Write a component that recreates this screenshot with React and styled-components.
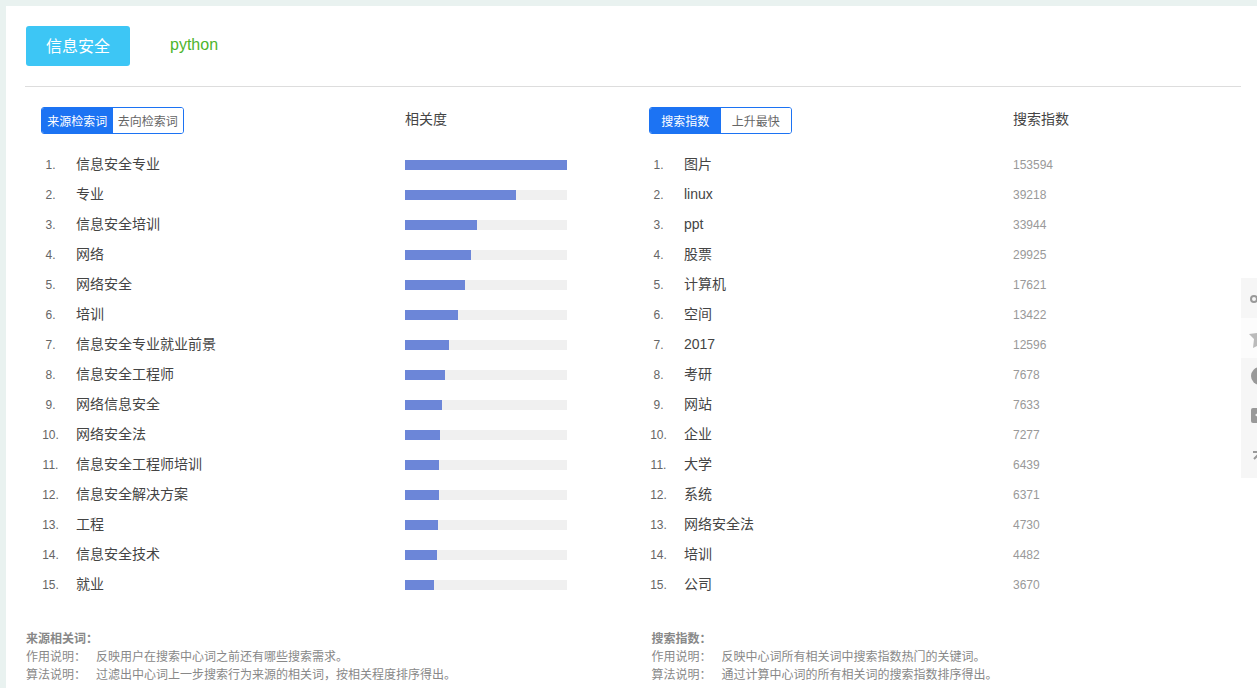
import React, { useState } from 'react';

import styled, { createGlobalStyle } from 'styled-components';

const GlobalStyle = createGlobalStyle`
  *, *::before, *::after {
    box-sizing: border-box;
  }

  body {
    margin: 0;
    background: #e9f2f0;
    color: #444;
    font-family: 'Liberation Sans', 'Noto Sans CJK SC', sans-serif;
    font-size: 14px;
  }

  button {
    font-family: inherit;
    cursor: pointer;
  }
`;

const Page = styled.div`
  padding: 6px 0 0 6px;
`;

const Panel = styled.main`
  min-height: calc(100vh - 6px);
  padding: 20px 16px 4px 19px;
  background: #fff;
`;

const KeywordBar = styled.nav`
  display: flex;
  gap: 20px;
  padding: 0 1px 20px;
  border-bottom: 1px solid #ddd;
`;

const Keyword = styled.button`
  height: 40px;
  padding: 0 20px 2px;
  border: 0;
  border-radius: 3px;
  background: ${({ $active }) => ($active ? '#3dc6f5' : 'transparent')};
  color: ${({ $active }) => ($active ? '#fff' : '#4db52b')};
  font-size: 16px;
`;

const Columns = styled.div`
  display: grid;
  grid-template-columns: 1fr 1fr;
  padding: 20px 0 0;
`;

const RankTable = styled.table`
  width: calc(100% - 16px);
  margin-left: 16px;
  border-collapse: collapse;
  table-layout: fixed;
`;

const NumberCol = styled.col`
  width: 35px;
`;

const ValueCol = styled.col`
  width: 228px;
`;

const HeadCell = styled.th`
  height: 43px;
  padding: 0;
  font-weight: 400;
  line-height: 24px;
  text-align: left;
  vertical-align: top;
`;

const Toggle = styled.div`
  display: flex;
  width: 143px;
  height: 27px;
  overflow: hidden;
  border: 1px solid #1c73f3;
  border-radius: 3px;
`;

const ToggleButton = styled.button`
  flex: 1;
  padding: 0 0 1px;
  border: 0;
  background: ${({ $active }) => ($active ? '#1c73f3' : '#fff')};
  color: ${({ $active }) => ($active ? '#fff' : '#666')};
  font-size: 12px;
  white-space: nowrap;
`;

const Cell = styled.td`
  height: 30px;
  padding: 0;
  line-height: 20px;
`;

const NumberCell = styled(Cell)`
  padding-right: 16px;
  color: #666;
  font-size: 12px;
  text-align: center;
`;

const NameCell = styled(Cell)`
  padding-bottom: 2px;
`;

const ValueCell = styled(Cell)`
  color: #999;
  font-size: 12px;
`;

const Track = styled.div`
  width: 162px;
  height: 10px;
  background: #f0f0f0;
`;

const Fill = styled.div`
  height: 100%;
  background: #6c86d8;
`;

const Notes = styled.div`
  display: grid;
  grid-template-columns: 1fr 1fr;
  gap: 36px;
  padding: 30px 0 0 1px;
  color: #888;
  font-size: 12px;
  line-height: 18px;
`;

const NoteTitle = styled.h2`
  margin: 0;
  font-size: 12px;
  font-weight: 700;
`;

const NoteLine = styled.p`
  display: flex;
  gap: 10px;
  margin: 0;
`;

const NoteLabel = styled.span`
  flex: none;
`;

const ShareBar = styled.aside`
  position: fixed;
  top: 278px;
  right: 0;
  display: flex;
  flex-direction: column;
  width: 16px;
  overflow: hidden;
`;

const ShareButton = styled.button`
  height: 40px;
  padding: 0;
  border: 0;
  background: ${({ $light }) => ($light ? '#fcfcfc' : '#f6f6f6')};
  color: ${({ $light }) => ($light ? '#bbb' : '#999')};

  svg {
    display: block;
  }
`;

const related = [
  ['信息安全专业', 162],
  ['专业', 111],
  ['信息安全培训', 72],
  ['网络', 66],
  ['网络安全', 60],
  ['培训', 53],
  ['信息安全专业就业前景', 44],
  ['信息安全工程师', 40],
  ['网络信息安全', 37],
  ['网络安全法', 35],
  ['信息安全工程师培训', 34],
  ['信息安全解决方案', 34],
  ['工程', 33],
  ['信息安全技术', 32],
  ['就业', 29],
];

const searches = [
  ['图片', 153594],
  ['linux', 39218],
  ['ppt', 33944],
  ['股票', 29925],
  ['计算机', 17621],
  ['空间', 13422],
  ['2017', 12596],
  ['考研', 7678],
  ['网站', 7633],
  ['企业', 7277],
  ['大学', 6439],
  ['系统', 6371],
  ['网络安全法', 4730],
  ['培训', 4482],
  ['公司', 3670],
];

const notes = [
  {
    title: '来源相关词：',
    usage: '反映用户在搜索中心词之前还有哪些搜索需求。',
    method: '过滤出中心词上一步搜索行为来源的相关词，按相关程度排序得出。',
  },
  {
    title: '搜索指数：',
    usage: '反映中心词所有相关词中搜索指数热门的关键词。',
    method: '通过计算中心词的所有相关词的搜索指数排序得出。',
  },
];

const shareItems = [
  {
    label: '微博',
    icon: <circle cx='13' cy='21' r='3' fill='none' stroke='currentColor' strokeWidth='2' />,
  },
  {
    label: '收藏',
    light: true,
    icon: <path d='M18 11l-2 4-8 1 5 5-1 9 6-3z' fill='currentColor' />,
  },
  {
    label: '微信',
    icon: <circle cx='19' cy='18' r='9' fill='currentColor' />,
  },
  {
    label: '视频',
    icon: (
      <>
        <rect x='10' y='10' width='18' height='15' rx='2' fill='currentColor' />
        <path d='M18 14l-4 3 4 3z' fill='#f6f6f6' />
      </>
    ),
  },
  {
    label: '更多',
    icon: <path d='M12 14h6M18 16l-5 5' fill='none' stroke='currentColor' strokeWidth='2' />,
  },
];

function RankList({ tabs, valueTitle, rows, renderValue }) {
  const [active, setActive] = useState(0);

  return (
    <RankTable>
      <colgroup>
        <NumberCol />
        <col />
        <ValueCol />
      </colgroup>
      <thead>
        <tr>
          <HeadCell colSpan={2}>
            <Toggle>
              {tabs.map((tab, i) => (
                <ToggleButton
                  key={tab}
                  type='button'
                  $active={i === active}
                  onClick={() => setActive(i)}
                >
                  {tab}
                </ToggleButton>
              ))}
            </Toggle>
          </HeadCell>
          <HeadCell>{valueTitle}</HeadCell>
        </tr>
      </thead>
      <tbody>
        {rows.map(([name, value], i) => (
          <tr key={name}>
            <NumberCell>{i + 1}.</NumberCell>
            <NameCell>{name}</NameCell>
            <ValueCell>{renderValue(value)}</ValueCell>
          </tr>
        ))}
      </tbody>
    </RankTable>
  );
}

function App() {
  const [keyword, setKeyword] = useState('信息安全');

  return (
    <Page>
      <GlobalStyle />
      <Panel>
        <KeywordBar>
          {['信息安全', 'python'].map((word) => (
            <Keyword
              key={word}
              type='button'
              $active={word === keyword}
              onClick={() => setKeyword(word)}
            >
              {word}
            </Keyword>
          ))}
        </KeywordBar>

        <Columns>
          <RankList
            tabs={['来源检索词', '去向检索词']}
            valueTitle='相关度'
            rows={related}
            renderValue={(value) => (
              <Track>
                <Fill style={{ width: `${(value / 162) * 100}%` }} />
              </Track>
            )}
          />
          <RankList
            tabs={['搜索指数', '上升最快']}
            valueTitle='搜索指数'
            rows={searches}
            renderValue={(value) => value}
          />
        </Columns>

        <Notes>
          {notes.map(({ title, usage, method }) => (
            <section key={title}>
              <NoteTitle>{title}</NoteTitle>
              <NoteLine>
                <NoteLabel>作用说明：</NoteLabel>
                {usage}
              </NoteLine>
              <NoteLine>
                <NoteLabel>算法说明：</NoteLabel>
                {method}
              </NoteLine>
            </section>
          ))}
        </Notes>
      </Panel>

      <ShareBar>
        {shareItems.map(({ label, light, icon }) => (
          <ShareButton key={label} type='button' aria-label={label} $light={light}>
            <svg width='16' height='40' viewBox='0 0 16 40'>
              {icon}
            </svg>
          </ShareButton>
        ))}
      </ShareBar>
    </Page>
  );
}

export default App;
